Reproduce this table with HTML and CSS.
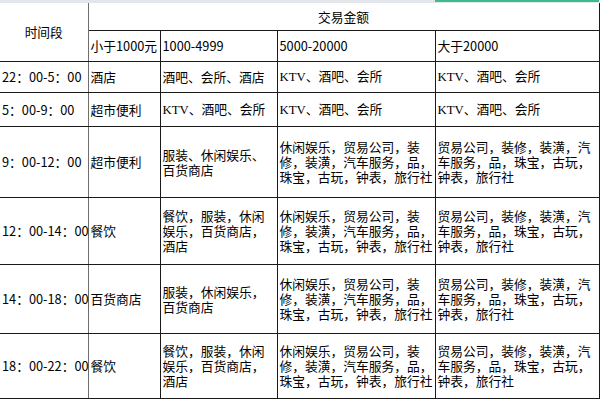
FILE: index.html
```html
<!DOCTYPE html>
<html lang="zh">
<head>
<meta charset="utf-8">
<link rel="stylesheet" href="styles.css">
</head>
<body>
<div class="strip"><div class="strip-green"></div></div>
<table class="sheet">
  <colgroup>
    <col class="c0"><col class="c1"><col class="c2"><col class="c3"><col class="c4">
  </colgroup>
  <tr class="r-h1">
    <td class="time head-time" rowspan="2">时间段</td>
    <td class="head-amount" colspan="4">交易金额</td>
  </tr>
  <tr class="r-h2">
    <td class="nowrap">小于1000元</td>
    <td>1000-4999</td>
    <td>5000-20000</td>
    <td class="grey-l">大于20000</td>
  </tr>
  <tr class="r-a">
    <td class="time">22：00-5：00</td>
    <td>酒店</td>
    <td>酒吧、会所、酒店</td>
    <td><span class="lat">KTV</span>、酒吧、会所</td>
    <td class="grey-l"><span class="lat">KTV</span>、酒吧、会所</td>
  </tr>
  <tr class="r-b">
    <td class="time">5：00-9：00</td>
    <td>超市便利</td>
    <td><span class="lat">KTV</span>、酒吧、会所</td>
    <td><span class="lat">KTV</span>、酒吧、会所</td>
    <td class="grey-l"><span class="lat">KTV</span>、酒吧、会所</td>
  </tr>
  <tr class="r-c">
    <td class="time">9：00-12：00</td>
    <td>超市便利</td>
    <td>服装、休闲娱乐、百货商店</td>
    <td>休闲娱乐，贸易公司，装修，装潢，汽车服务，品，珠宝，古玩，钟表，旅行社</td>
    <td class="grey-l">贸易公司，装修，装潢，汽车服务，品，珠宝，古玩，钟表，旅行社</td>
  </tr>
  <tr class="r-d">
    <td class="time">12：00-14：00</td>
    <td>餐饮</td>
    <td>餐饮，服装，休闲娱乐，百货商店，酒店</td>
    <td>休闲娱乐，贸易公司，装修，装潢，汽车服务，品，珠宝，古玩，钟表，旅行社</td>
    <td class="grey-l">贸易公司，装修，装潢，汽车服务，品，珠宝，古玩，钟表，旅行社</td>
  </tr>
  <tr class="r-e">
    <td class="time">14：00-18：00</td>
    <td>百货商店</td>
    <td>服装，休闲娱乐，百货商店</td>
    <td>休闲娱乐，贸易公司，装修，装潢，汽车服务，品，珠宝，古玩，钟表，旅行社</td>
    <td class="grey-l">贸易公司，装修，装潢，汽车服务，品，珠宝，古玩，钟表，旅行社</td>
  </tr>
  <tr class="r-f">
    <td class="time">18：00-22：00</td>
    <td>餐饮</td>
    <td>餐饮，服装，休闲娱乐，百货商店，酒店</td>
    <td>休闲娱乐，贸易公司，装修，装潢，汽车服务，品，珠宝，古玩，钟表，旅行社</td>
    <td class="grey-l">贸易公司，装修，装潢，汽车服务，品，珠宝，古玩，钟表，旅行社</td>
  </tr>
</table>
</body>
</html>
```
FILE: styles.css
```css
html, body {
  margin: 0;
  padding: 0;
  background: #ffffff;
}
body {
  font-family: "Noto Sans CJK SC", "Noto Sans", sans-serif;
  font-size: 12.75px;
  line-height: 15px;
  color: #000;
  width: 600px;
  height: 400px;
  overflow: hidden;
}
.strip {
  height: 3px;
  width: 600px;
  background: #e3e7ec;
  display: flex;
  justify-content: flex-end;
}
.strip-green {
  width: 164px;
  margin-right: 1px;
  height: 2px;
  background: #3dbb8a;
}
.sheet {
  border-collapse: collapse;
  table-layout: fixed;
  width: 599px;
}
.c0 { width: 88px; }
.c1 { width: 72px; }
.c2 { width: 117px; }
.c3 { width: 158px; }
.c4 { width: 164px; }
.sheet td {
  border: 1px solid #1a1a1a;
  padding: 0 1px 0 2px;
  vertical-align: middle;
  text-align: left;
  overflow: visible;
}
.sheet tr td:first-child {
  border-left: none;
}
.sheet tr.r-h1 td {
  border-top: none;
}
.sheet td.nowrap {
  white-space: nowrap;
}
.sheet td.time {
  white-space: nowrap;
  border-right-color: #6e6e6e;
  padding: 0 0 0 2px;
}
.sheet td.head-time {
  text-align: center;
  padding: 0;
}
.sheet td.head-amount {
  text-align: center;
  padding: 0;
}
.sheet td.grey-l {
  border-left-color: #6e6e6e;
}
.lat {
  font-family: "Liberation Serif", serif;
}
.r-h1 { height: 27px; }
.r-h2 { height: 31px; }
.r-a { height: 31px; }
.r-b { height: 34px; }
.r-c { height: 71px; }
.r-d { height: 67px; }
.r-e { height: 69px; }
.r-f { height: 65px; }
```
